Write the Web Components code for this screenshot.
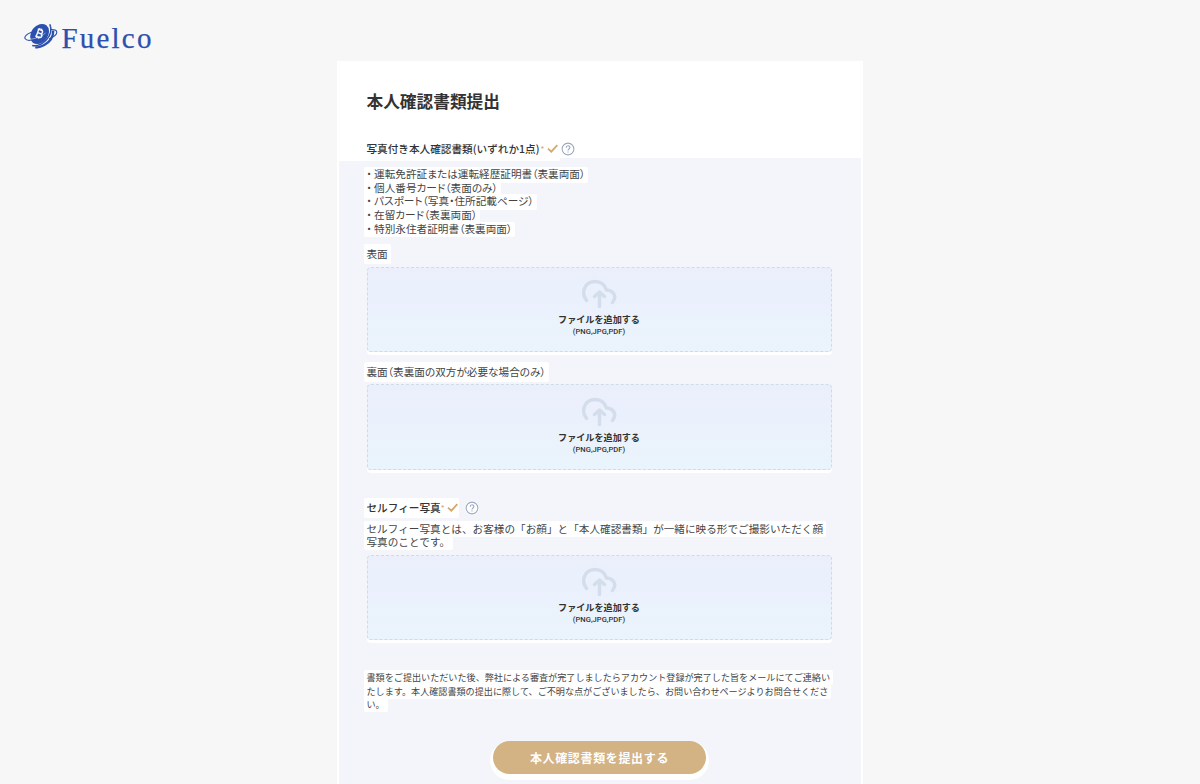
<!DOCTYPE html>
<html lang="ja">
<head>
<meta charset="UTF-8">
<title>本人確認書類提出</title>
<style>
    html, body { height: 100%; }
    body {
        margin: 0;
        overflow: hidden;
        background: #f7f7f7;
        color: #3a3a3a;
        font-family: "Noto Sans CJK JP", sans-serif;
    }
</style>
</head>
<body>
<kyc-page>
    <brand-logo slot="logo">Fuelco</brand-logo>
    <kyc-card>
        <span slot="title">本人確認書類提出</span>
        <field-label slot="lead" required style="--gap: 1px; --help-gap: 2px">写真付き本人確認書類(いずれか1点)</field-label>
        <doc-list>
            <doc-item>運転免許証または運転経歴証明書（表裏両面）</doc-item>
            <doc-item>個人番号カード（表面のみ）</doc-item>
            <doc-item>パスポート（写真・住所記載ページ）</doc-item>
            <doc-item>在留カード（表裏両面）</doc-item>
            <doc-item>特別永住者証明書（表裏両面）</doc-item>
        </doc-list>
        <upload-field style="margin-top: 11.8px">
            <field-label slot="label" plain>表面</field-label>
        </upload-field>
        <upload-field style="margin-top: 12.6px">
            <field-label slot="label" plain>裏面（表裏面の双方が必要な場合のみ）</field-label>
        </upload-field>
        <upload-field style="margin-top: 31.4px">
            <field-label slot="label" required style="--gap: 0px; --help-gap: 6px">セルフィー写真</field-label>
            <text-block slot="text" style="margin-top: 6.6px; letter-spacing: .03px">セルフィー写真とは、お客様の「お顔」と「本人確認書類」が一緒に映る形でご撮影いただく顔<br>写真のことです。</text-block>
        </upload-field>
        <text-block style="margin-top: 31.3px; font-size: 9.1px">書類をご提出いただいた後、弊社による審査が完了しましたらアカウント登録が完了した旨をメールにてご連絡い<br>たします。本人確認書類の提出に際して、ご不明な点がございましたら、お問い合わせページよりお問合せくださ<br>い。</text-block>
        <submit-button>本人確認書類を提出する</submit-button>
    </kyc-card>
</kyc-page>

<script>
function define(name, html) {
    customElements.define(name, class extends HTMLElement {
        constructor() {
            super();
            this.attachShadow({ mode: 'open' }).innerHTML = html;
        }
    });
}

// Página: logo no topo e o cartão centralizado
define('kyc-page', `
    <style>
        :host { display: flex; flex-direction: column; height: 784px; overflow: hidden; }
        header { height: 61px; flex: none; box-sizing: border-box; padding: 21px 0 0 24px; }
        main { display: flex; justify-content: center; flex: 1; padding-right: 1px; }
    </style>
    <header><slot name="logo"></slot></header>
    <main><slot></slot></main>
`);

define('brand-logo', `
    <style>
        :host { display: flex; align-items: flex-start; color: #2b50ae; }
        svg { width: 34px; height: 30px; flex: none; }
        span {
            font: 29px/34px "Liberation Serif", serif;
            letter-spacing: 2.2px;
            margin: 0 0 0 3.5px;
            -webkit-text-stroke: .25px currentColor;
        }
    </style>
    <svg viewBox="0 0 34 30" fill="none" stroke="currentColor">
        <ellipse cx="15.600" cy="13" rx="8.400" ry="11" transform="rotate(38 15.600 13)" fill="currentColor" stroke="none"/>
        <path d="M7.500 11.200C2.800 12.800-.2 15.700 1.200 17.800c1.300 2 6.500 1.700 12-.2" stroke-width="1.100"/>
        <path d="M26.500 8.600c3.900-.3 6.300.7 6.300 2.700 0 2.200-3.300 4.800-7.800 6.600" stroke-width="1.100"/>
        <path d="M25.800 3.300c2.200 5 .700 11-3.300 15.400-4 4.100-9.600 6.700-14.300 5.700" stroke-width="1.500"/>
        <path d="M29.300 9.500c0 6-3.400 11.500-9 14.600-3.100 1.700-6.600 2.700-9 2" stroke-width="2.300"/>
        <path d="M3.500 18.200c4.500.7 12.500-2 18-6.200" stroke="#f7f7f7" stroke-width=".5"/>
        <g stroke="#f7f7f7" stroke-width="1.400" transform="rotate(20 15.500 12.500)">
            <path d="M13.400 8.800v7.400M12.300 8.800h3.900c2.300 0 2.300 3.500 0 3.500h-2.700 3.100c2.600 0 2.600 3.900 0 3.900h-4.300M14.300 7.300v1.500M16.200 7.300v1.500M14.300 16.200v1.500M16.200 16.200v1.500"/>
        </g>
    </svg>
    <span><slot></slot></span>
`);

// Cartão: cabeçalho branco e corpo lavanda
define('kyc-card', `
    <style>
        :host { display: flex; flex-direction: column; width: 526px; background: #fff; }
        header { height: 97px; flex: none; padding-left: 30px; }
        h1 {
            margin: 0;
            padding-top: 27.600px;
            height: 24px;
            font-size: 16.7px;
            line-height: 24px;
            font-weight: 700;
            color: #333;
        }
        .lead { padding-top: 29px; }
        .body {
            flex: 1;
            display: flex;
            flex-direction: column;
            margin: 0 2px;
            padding: 0 28px;
            background: linear-gradient(#fff, #fff) 0 0 / 221px 3px no-repeat, #f4f5fb;
        }
    </style>
    <header>
        <h1><slot name="title"></slot></h1>
        <div class="lead"><slot name="lead"></slot></div>
    </header>
    <div class="body"><slot></slot></div>
`);

define('field-label', `
    <style>
        :host { display: flex; height: 14px; font-size: 10.64px; line-height: 14px; font-weight: 500; color: #333; }
        :host([plain]) { font-weight: 400; font-feature-settings: "palt"; color: #444; }
        .text {
            display: flex;
            background: #fff;
            border-radius: 2px;
            margin: -3px 0 -3px -3px;
            padding: 3px;
            height: 14px;
            white-space: nowrap;
        }
        .marks { display: none; }
        :host([required]) .marks { display: flex; }
        :host([required]) .text { padding-right: 0; }
        .star { width: 5px; margin-left: var(--gap); font-size: 8px; line-height: 13px; color: #d9ab6c; }
        .check { width: 12px; height: 14px; margin-left: 1px; }
        .help { width: 14px; height: 14px; margin-left: var(--help-gap); background: #fff; border-radius: 7px; }
    </style>
    <span class="text"><slot></slot>
        <span class="marks">
            <span class="star">*</span>
            <svg class="check" viewBox="0 0 12 14" fill="none" stroke="#d4a86a" stroke-width="1.8"><path d="M1 6.700l3.300 3 6-6.500"/></svg>
        </span>
    </span>
    <span class="marks">
        <svg class="help" viewBox="0 0 14 14" fill="none" stroke="#9ba7bf" stroke-width="1.100">
            <circle cx="7" cy="7" r="5.900"/>
            <path d="M5.200 5.700c0-2.500 3.700-2.500 3.700-.2 0 1.500-1.900 1.500-1.900 2.900M7 9.500v1.100"/>
        </svg>
    </span>
`);

define('doc-list', `
    <style>
        :host { display: flex; flex-direction: column; align-items: flex-start; margin-top: 9px; }
    </style>
    <slot></slot>
`);

define('doc-item', `
    <style>
        :host {
            display: flex;
            height: 13.7px;
            margin-left: -3px;
            padding: 0 3px;
            box-shadow: 0 2px 0 #fff;
            background: #fff;
            border-radius: 2px;
            font-size: 10.64px;
            line-height: 13.7px;
            font-feature-settings: "palt";
            white-space: nowrap;
            color: #444;
        }
        i { width: 7.6px; font-style: normal; }
    </style>
    <i>・</i><span><slot></slot></span>
`);

define('text-block', `
    <style>
        :host { display: block; font-size: 10.6px; line-height: 13.6px; white-space: nowrap; color: #444; }
        span {
            background: #fff;
            border-radius: 2px;
            padding: 0 3px 1px;
            margin-left: -3px;
            -webkit-box-decoration-break: clone;
            box-decoration-break: clone;
        }
        div { margin-right: -8px; }
    </style>
    <div><span><slot></slot></span></div>
`);

define('upload-field', `
    <style>
        :host { display: block; }
        .drop {
            display: flex;
            flex-direction: column;
            align-items: center;
            box-sizing: border-box;
            width: 465px;
            height: 85.400px;
            margin-top: 5.600px;
            padding-top: 11.600px;
            border: 1px dashed #d2dae8;
            border-radius: 4px;
            background: linear-gradient(#ebeffc, #eaf4fc);
            box-shadow: 0 3px 0 #fff;
        }
        svg { width: 36px; height: 30px; }
        b { margin-top: 3px; font-size: 9.1px; line-height: 14px; font-weight: 700; color: #333; }
        small { margin-top: 1px; font: 500 7.600px/10px Roboto, sans-serif; color: #333; }
    </style>
    <slot name="label"></slot>
    <slot name="text"></slot>
    <div class="drop">
        <svg viewBox="0 0 36 30" fill="none" stroke="#d3ddeb" stroke-width="3.500" stroke-linecap="round" stroke-linejoin="round">
            <path d="M5.500 21.500C-.5 14 3.500 3 13.500 2.500c6-.3 10.500 3.500 12 8.500 7.500.3 10.500 7 6 12.500"/>
            <path d="M18.500 27.500V14M13.500 17.500l5-4.500 5 4.500"/>
        </svg>
        <b>ファイルを追加する</b>
        <small>(PNG,JPG,PDF)</small>
    </div>
`);

define('submit-button', `
    <style>
        :host { display: flex; justify-content: center; margin-top: 29px; }
        button {
            width: 213px;
            height: 33px;
            padding: 0;
            border: 0;
            border-radius: 17px;
            background: #d3b283;
            box-shadow: 0 3px 0 3px #fff;
            color: #fff;
            font: 700 12px/33px "Noto Sans CJK JP", sans-serif;
            letter-spacing: .65px;
        }
    </style>
    <button type="button"><slot></slot></button>
`);
</script>
</body>
</html>
